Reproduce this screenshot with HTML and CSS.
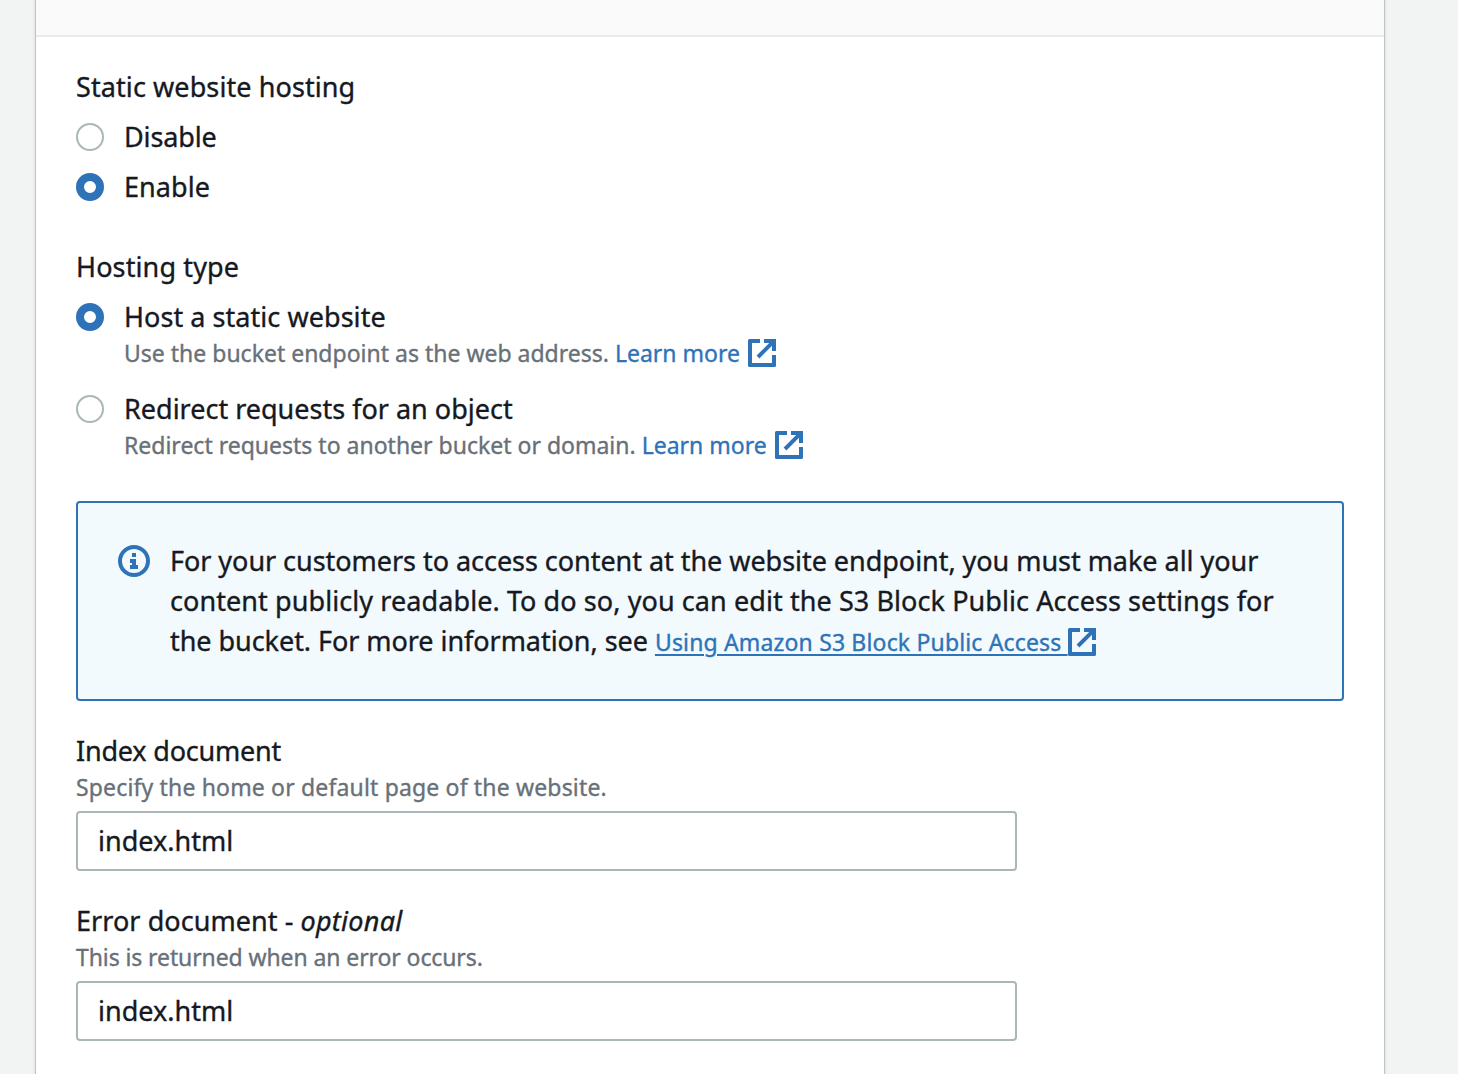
FILE: index.html
```html
<!DOCTYPE html>
<html lang="en">
<head>
<meta charset="utf-8">
<title>Edit static website hosting</title>
<link rel="stylesheet" href="styles.css">
</head>
<body>
<svg width="0" height="0" class="sprite" aria-hidden="true">
  <symbol id="external" viewBox="0 0 28 28">
    <path d="M1.500 0H12V4H4V24H24V16H28V26.500Q28 28 26.500 28H1.500Q0 28 0 26.500V1.500Q0 0 1.500 0ZM16 0H28V12H24V6.800L11.400 19.400L8.600 16.600L21.200 4H16Z" fill="currentColor"/>
  </symbol>
</svg>
<main class="panel">
  <header class="panel-header"></header>
  <form class="content">
    <fieldset class="group">
      <legend class="label"><span class="t-static">Static website hosting</span></legend>
      <label class="option"><input type="radio" name="hosting"><span class="t-disable">Disable</span></label>
      <label class="option"><input type="radio" name="hosting" checked><span class="t-enable">Enable</span></label>
    </fieldset>
    <fieldset class="group">
      <legend class="label"><span class="t-type">Hosting type</span></legend>
      <label class="option"><input type="radio" name="type" checked><span class="t-host">Host a static website</span></label>
      <p class="hint indent">Use the bucket endpoint as the web address. <a href="#">Learn more<svg class="ext"><use href="#external"/></svg></a></p>
      <label class="option second"><input type="radio" name="type"><span>Redirect requests for an object</span></label>
      <p class="hint indent">Redirect requests to another bucket or domain. <a href="#">Learn more<svg class="ext"><use href="#external"/></svg></a></p>
    </fieldset>
    <section class="alert">
      <svg class="info" viewBox="0 0 32 32"><circle cx="16" cy="16" r="14" fill="none" stroke="currentColor" stroke-width="4"/><path d="M14 8h4v4h-4zM12 14h6v6h2v4h-8v-4h2v-2h-2z" fill="currentColor"/></svg>
      <p class="message"><span class="t-m1">For your customers to access content at the website endpoint, you must make all your</span><br><span class="t-m2">content publicly readable. To do so, you can edit the S3 Block Public Access settings for</span><br><span class="t-m3">the bucket. For more information, see</span> <a href="#">Using Amazon S3 Block Public Access <svg class="ext"><use href="#external"/></svg></a></p>
    </section>
    <section class="field">
      <label class="label" for="index"><span class="t-index">Index document</span></label>
      <p class="hint t-specify">Specify the home or default page of the website.</p>
      <input class="text" id="index" type="text" value="index.html">
    </section>
    <section class="field">
      <label class="label" for="error"><span class="t-error">Error document - </span><em class="t-optional">optional</em></label>
      <p class="hint t-returned">This is returned when an error occurs.</p>
      <input class="text" id="error" type="text" value="index.html">
    </section>
  </form>
</main>
</body>
</html>
```
FILE: styles.css
```css
* { box-sizing: border-box; }
body { margin: 0; height: 1074px; overflow: hidden; background: #f2f3f3; color: #16191f; font: 27px/40px "Noto Sans", sans-serif; -webkit-text-stroke: 0.35px currentColor; }
.sprite { position: absolute; }
.panel { width: 1348px; height: 1074px; margin-left: 36px; background: #fff; box-shadow: 0 0 0 1px #bfc5c7, 0 0 3px 1px #d5dbdb; }
.panel-header { height: 37px; background: #fafafa; border-bottom: 2px solid #eaeaea; }
.content { padding: 30px 40px 0; }
.group { border: 0; margin: 0 0 40px; padding: 0; }
.label, .option { display: flex; height: 40px; padding: 0; white-space: pre; }
.option { margin-top: 10px; align-items: center; }
.option.second { margin-top: 20px; }
input[type="radio"] { appearance: none; width: 28px; height: 28px; margin: 0 20px 0 0; border: 2px solid #aab7b8; border-radius: 50%; background: #fff; }
input[type="radio"]:checked { border: 8px solid #2e73b8; }
.hint { margin: 0; height: 32px; font-size: 23px; line-height: 32px; color: #687078; white-space: nowrap; }
.indent { padding-left: 48px; }
a { color: #2e73b8; text-decoration: none; }
.ext { width: 28px; height: 28px; margin-left: 8px; vertical-align: -5px; }
.alert { display: flex; gap: 20px; height: 200px; padding: 38px 40px; border: 2px solid #2e73b8; border-radius: 4px; background: #f2fafd; }
.info { width: 32px; height: 32px; margin-top: 4px; color: #2e73b8; flex: none; }
.message { margin: 0; white-space: nowrap; }
.message a { font-size: 23px; letter-spacing: 0.16px; text-decoration: underline; text-decoration-thickness: 2px; text-underline-offset: 3px; }
.message .ext { margin-left: 0; }
.field { margin-top: 30px; }
.text { display: block; width: 941px; height: 60px; margin-top: 8px; padding: 0 20px 2px; border: 2px solid #aab7b8; border-radius: 4px; font: inherit; color: inherit; background: #fff; -webkit-text-stroke: inherit; }

/* Tracking per label */
.t-static { letter-spacing: 0.09px; }
.t-disable { letter-spacing: -0.12px; }
.t-enable { letter-spacing: 0.08px; }
.t-type { letter-spacing: 0.12px; }
.t-host { letter-spacing: 0.05px; }
.t-m1 { letter-spacing: -0.04px; }
.t-m2 { letter-spacing: 0.08px; }
.t-m3 { letter-spacing: -0.05px; }
.t-index { letter-spacing: -0.2px; }
.t-error { letter-spacing: 0.06px; }
.t-optional { letter-spacing: 0.25px; }
.t-specify { letter-spacing: 0.16px; }
.t-returned { letter-spacing: -0.1px; }
```
